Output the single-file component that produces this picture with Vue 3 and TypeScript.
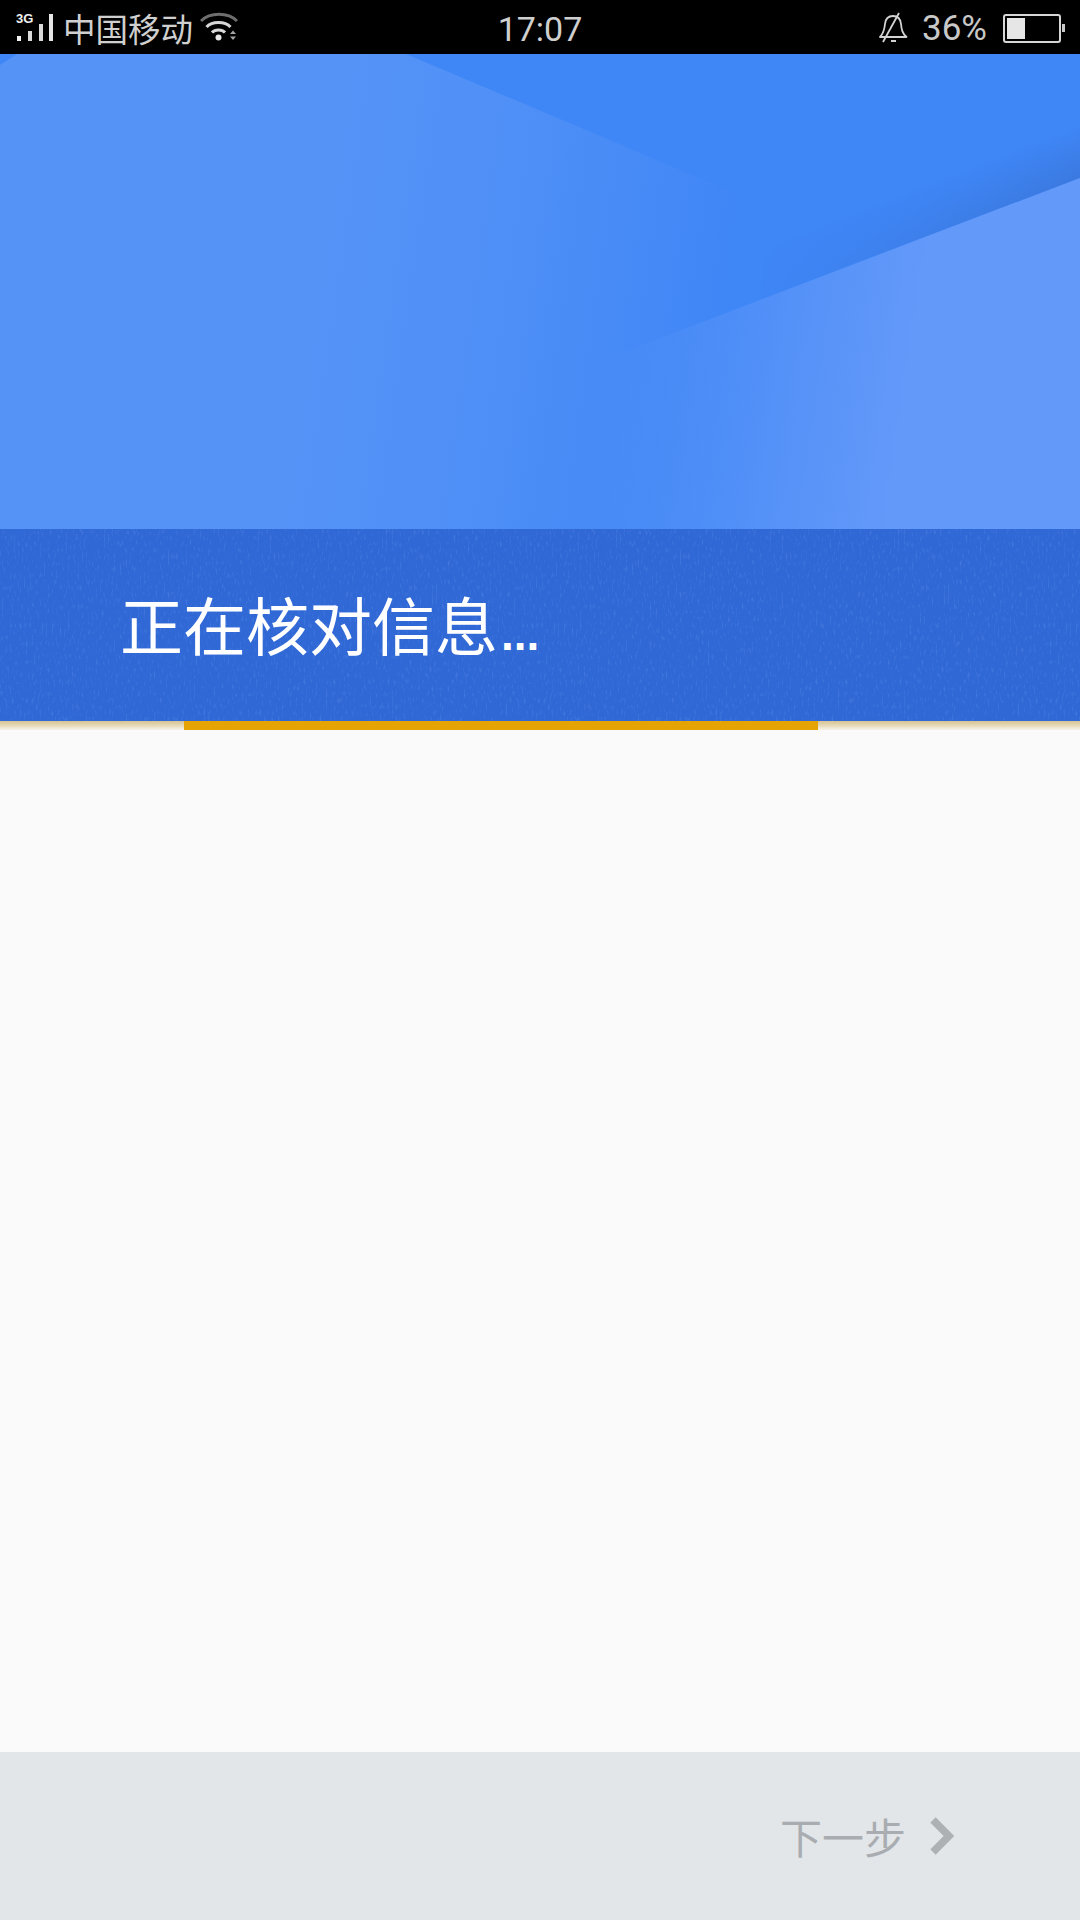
<script setup lang="ts">
const title = '正在核对信息'
const dots = '...'
</script>

<template>
  <div class="page">
    <header class="status">
      <div class="status-left">
        <div class="signal">
          <span class="net">3G</span>
          <svg width="40" height="32" viewBox="0 0 40 32" class="bars">
            <rect x="1" y="22" width="4" height="5" fill="#f2f2f2" />
            <rect x="12" y="17" width="4" height="10" fill="#d9d9d9" />
            <rect x="23" y="10" width="4" height="17" fill="#d9d9d9" />
            <rect x="33" y="0" width="4" height="27" fill="#e6e6e6" />
          </svg>
        </div>
        <span class="carrier">中国移动</span>
        <svg class="wifi" width="38" height="30" viewBox="0 0 38 30" fill="none">
          <path d="M1 9 C10 0 28 0 37 9" stroke="#6e6e6e" stroke-width="3" />
          <path d="M6.500 15 C12 9 25 9 30.500 15" stroke="#d8d8d8" stroke-width="3" />
          <path d="M12 20.500 C15 17 22 17 25 20.500" stroke="#d8d8d8" stroke-width="3" />
          <circle cx="18.500" cy="25.500" r="3" fill="#e6e6e6" />
          <path d="M30 22 L33 18.500 L36 22 Z M30 24.500 L33 28 L36 24.500 Z" fill="#a5a5a5" />
        </svg>
      </div>
      <span class="clock">17:07</span>
      <div class="status-right">
        <svg class="bell" width="30" height="32" viewBox="0 0 30 32" fill="none" stroke="#d2d2d2" stroke-width="1.800">
          <path d="M2 25 C6 21 6.500 17 7 12 C7.500 7 10.500 4 15 4 C19.500 4 22.500 7 23 12 C23.500 17 24 21 28.500 25 Z" stroke-linejoin="round" />
          <path d="M21 1 L5 30" />
          <path d="M13 29 H18" stroke-width="2" />
        </svg>
        <span class="percent">36%</span>
        <div class="battery">
          <div class="battery-shell"><div class="battery-level" :style="{ width: '36%' }"></div></div>
          <div class="battery-nub"></div>
        </div>
      </div>
    </header>

    <section class="hero">
      <svg class="hero-art" width="1080" height="475" viewBox="0 0 1080 475" preserveAspectRatio="none">
        <defs>
          <linearGradient id="leftFace" x1="350" y1="0" x2="760" y2="60" gradientUnits="userSpaceOnUse">
            <stop offset="0" stop-color="#5593f7" stop-opacity="1" />
            <stop offset="0.45" stop-color="#5593f7" stop-opacity="0.7" />
            <stop offset="1" stop-color="#5593f7" stop-opacity="0" />
          </linearGradient>
          <linearGradient id="rightFace" x1="650" y1="0" x2="950" y2="45" gradientUnits="userSpaceOnUse">
            <stop offset="0" stop-color="#6399f9" stop-opacity="0" />
            <stop offset="0.5" stop-color="#6399f9" stop-opacity="0.5" />
            <stop offset="1" stop-color="#6399f9" stop-opacity="1" />
          </linearGradient>
          <linearGradient id="edgeShade" x1="1000" y1="154" x2="983" y2="110" gradientUnits="userSpaceOnUse">
            <stop offset="0" stop-color="#3a75d8" stop-opacity="0.75" />
            <stop offset="1" stop-color="#3a75d8" stop-opacity="0" />
          </linearGradient>
          <linearGradient id="edgeFade" x1="760" y1="0" x2="1080" y2="0" gradientUnits="userSpaceOnUse">
            <stop offset="0" stop-color="#000" />
            <stop offset="1" stop-color="#fff" />
          </linearGradient>
          <mask id="edgeMask"><rect width="1080" height="475" fill="url(#edgeFade)" /></mask>
        </defs>
        <rect width="1080" height="475" fill="#3f86f6" />
        <polygon points="0,11 17,0 406,0 780,158 780,475 0,475" fill="url(#leftFace)" />
        <polygon points="1080,124 760,245 760,130 1080,60" fill="url(#edgeShade)" mask="url(#edgeMask)" />
        <polygon points="1080,124 500,345 500,475 1080,475" fill="url(#rightFace)" />
      </svg>
    </section>

    <section class="band">
      <svg class="noise" width="1080" height="192">
        <filter id="grain">
          <feTurbulence type="fractalNoise" baseFrequency="0.5 0.16" numOctaves="2" seed="4" />
          <feColorMatrix type="matrix" values="0 0 0 0 0.55  0 0 0 0 0.7  0 0 0 0 1  0 0 0 1.600 -0.900" />
        </filter>
        <rect width="1080" height="192" filter="url(#grain)" opacity="0.28" />
      </svg>
      <h1 class="title">{{ title }}<span class="dots">{{ dots }}</span></h1>
    </section>

    <div class="progress">
      <div class="progress-value"></div>
    </div>

    <main class="body"></main>

    <footer class="footer">
      <span class="next">下一步</span>
      <svg class="chevron" width="24" height="38" viewBox="0 0 24 38" fill="none">
        <path d="M3 3 L19 19 L3 35" stroke="#aeb1b4" stroke-width="7.500" />
      </svg>
    </footer>
  </div>
</template>

<style>
html, body { margin: 0; background: #fafafa; }
</style>

<style scoped>
.page {
  width: 1080px;
  height: 1920px;
  display: flex;
  flex-direction: column;
  overflow: hidden;
  font-family: "Noto Sans CJK SC", "Liberation Sans", sans-serif;
  background: #fafafa;
}
.status {
  height: 54px;
  flex: none;
  background: #000;
  color: #cfcfcf;
  display: grid;
  grid-template-columns: 1fr auto 1fr;
  align-items: center;
}
.status-left {
  display: flex;
  align-items: center;
  padding-left: 16px;
}
.signal {
  position: relative;
  width: 47px;
  height: 54px;
}
.net {
  position: absolute;
  left: 0;
  top: 10px;
  font: bold 13px/15px "Liberation Sans", sans-serif;
  color: #f0f0f0;
}
.bars {
  position: absolute;
  left: 0;
  top: 13px;
}
.carrier {
  font-size: 32.5px;
  line-height: 54px;
  width: 137px;
  color: #cfcfcf;
}
.wifi { display: block; margin-top: -2px; }
.clock {
  font: 34px/54px Roboto, "Liberation Sans", sans-serif;
  color: #cfcfcf;
  margin-top: 2px;
}
.status-right {
  display: flex;
  align-items: center;
  justify-content: flex-end;
  padding-right: 15px;
}
.bell { display: block; margin-right: 14px; margin-top: -1px; }
.percent {
  font: 35px/54px Roboto, "Liberation Sans", sans-serif;
  color: #c8c8c8;
  margin-right: 16px;
  margin-top: 2px;
}
.battery {
  display: flex;
  align-items: center;
}
.battery-shell {
  width: 50px;
  height: 21px;
  padding: 2px;
  border: 2px solid #d6d6d6;
  border-radius: 3px;
}
.battery-level {
  height: 100%;
  background: #e6e6e6;
}
.battery-nub {
  width: 3px;
  height: 8px;
  margin-left: 1px;
  background: #c8c8c8;
}
.hero {
  height: 475px;
  flex: none;
}
.hero-art { display: block; }
.band {
  position: relative;
  height: 192px;
  flex: none;
  background: #3068d6;
  display: flex;
  align-items: center;
  padding-left: 120px;
}
.noise {
  position: absolute;
  left: 0;
  top: 0;
}
.title {
  position: relative;
  margin: 6px 0 0;
  font-size: 63px;
  font-weight: 400;
  line-height: 80px;
  color: #fff;
  font-family: "Noto Sans CJK SC", "Liberation Sans", sans-serif;
}
.dots {
  font: bold 46px/80px "Liberation Sans", sans-serif;
  margin-left: 3px;
}
.progress {
  height: 9px;
  flex: none;
  background: linear-gradient(#d6c393, #e6d9b8 50%, #f4efe2 90%);
}
.progress-value {
  width: 634px;
  height: 100%;
  margin-left: 184px;
  background: #e5a404;
}
.body { flex: 1; background: #fafafa; }
.footer {
  height: 168px;
  flex: none;
  background: #e2e6e9;
  display: flex;
  align-items: center;
  justify-content: flex-end;
  padding-right: 126px;
}
.next {
  font-size: 42px;
  line-height: 60px;
  color: #a9adb1;
  margin-right: 24px;
}
.chevron { display: block; }
</style>
